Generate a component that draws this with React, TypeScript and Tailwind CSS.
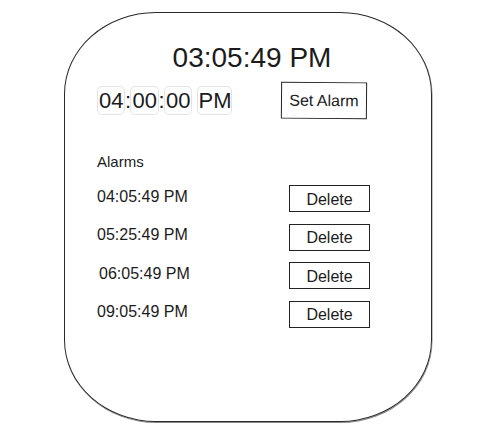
import React from "react";

const alarms = ["04:05:49 PM", "05:25:49 PM", "06:05:49 PM", "09:05:49 PM"];

const Seg = ({ v }: { v: string }) => (
  <span className="border border-[#e3e3e3] rounded-[5px] px-[1px] leading-[27px]">{v}</span>
);

const Colon = () => <span className="w-[5px] flex justify-center">:</span>;

const App = () => {
  return (
    <div
      className="w-full h-[444px] bg-white pt-[12px] pl-[64px] text-[#1b1b1b]"
      style={{ fontFamily: '"Liberation Sans", Arial, sans-serif' }}
    >
      <div className="w-[368px] h-[410px] rounded-[92px/82px] border-[1.5px] border-[#2a2a2a] shadow-[0.5px_1px_0_#888] flex flex-col">
        <h1 className="mt-[28px] text-center text-[28px] leading-[34px] pl-[8px]">03:05:49 PM</h1>

        <div className="mt-[7px] flex items-center justify-between pl-[32px] pr-[64px]">
          <div className="flex items-center text-[22px]">
            <Seg v="04" />
            <Colon />
            <Seg v="00" />
            <Colon />
            <Seg v="00" />
            <span className="w-[5px]" />
            <span className="border border-[#e3e3e3] rounded-[5px] leading-[27px]">PM</span>
          </div>
          <button className="h-[37px] w-[86px] border-[1.5px] border-[#222] rotate-[0.5deg] text-[16px] bg-white">
            Set Alarm
          </button>
        </div>

        <div className="mt-[33px] pl-[32px] text-[15px] leading-[20px]">Alarms</div>

        <div className="mt-[13px] flex flex-col gap-[11.5px] pl-[32px] pr-[61px]">
          {alarms.map((a, i) => (
            <div key={a} className="flex items-center justify-between h-[27px]">
              <span className={"text-[16px] leading-[20px] -mt-[4px] " + (i === 2 ? "pl-[2px]" : "")}>{a}</span>
              <button className="h-[27px] w-[81px] border-[1.5px] border-[#222] text-[16px] leading-[20px] pt-[2px] bg-white">
                Delete
              </button>
            </div>
          ))}
        </div>
      </div>
    </div>
  );
};

export default App;
